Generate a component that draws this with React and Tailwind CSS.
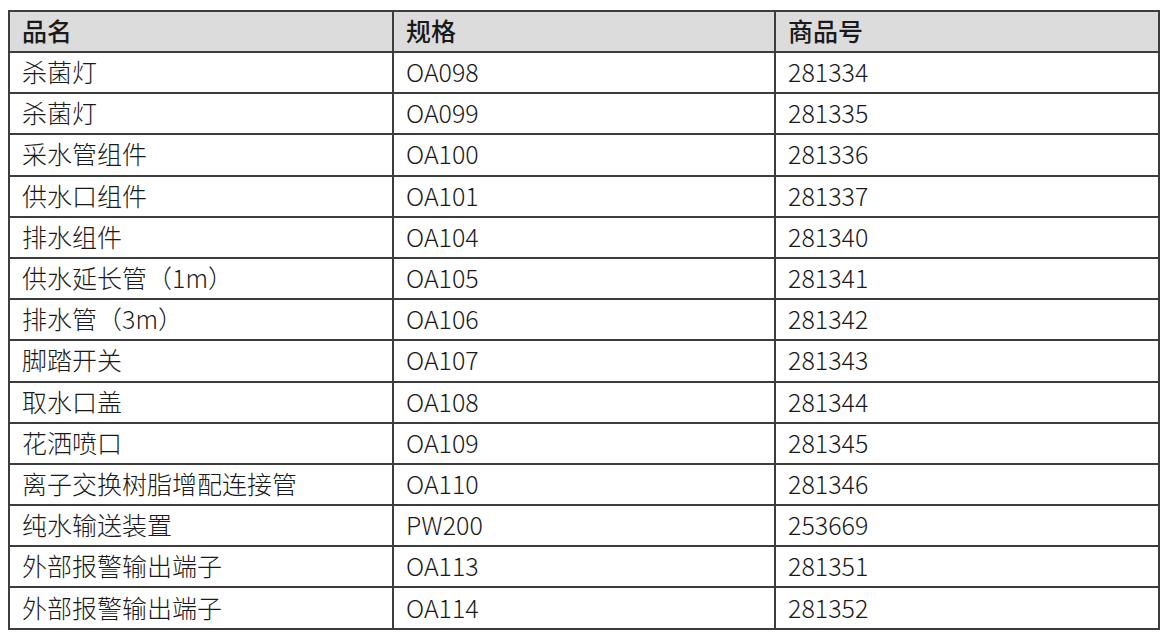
import React from 'react'

const rows = [
    ['杀菌灯', 'OA098', '281334'],
    ['杀菌灯', 'OA099', '281335'],
    ['采水管组件', 'OA100', '281336'],
    ['供水口组件', 'OA101', '281337'],
    ['排水组件', 'OA104', '281340'],
    ['供水延长管（1m）', 'OA105', '281341'],
    ['排水管（3m）', 'OA106', '281342'],
    ['脚踏开关', 'OA107', '281343'],
    ['取水口盖', 'OA108', '281344'],
    ['花洒喷口', 'OA109', '281345'],
    ['离子交换树脂增配连接管', 'OA110', '281346'],
    ['纯水输送装置', 'PW200', '253669'],
    ['外部报警输出端子', 'OA113', '281351'],
    ['外部报警输出端子', 'OA114', '281352'],
]

export default function App() {
    return (
        <div className="min-h-screen bg-white pt-[10px] pl-[8px] text-[#1a1a1a]" style={{ fontFamily: '"Noto Sans CJK SC", "Noto Sans", sans-serif' }}>
            <table className="w-[1150px] table-fixed border-collapse text-[25px] leading-none">
                <colgroup>
                    <col className="w-[384px]" />
                    <col className="w-[382px]" />
                    <col className="w-[384px]" />
                </colgroup>
                <thead>
                    <tr className="h-[41px] bg-[#dcdcdc]">
                        <th className="border-2 border-[#3c3c3c] pl-[12px] pb-[2px] text-left font-medium">品名</th>
                        <th className="border-2 border-[#3c3c3c] pl-[12px] pb-[2px] text-left font-medium">规格</th>
                        <th className="border-2 border-[#3c3c3c] pl-[12px] pb-[2px] text-left font-medium">商品号</th>
                    </tr>
                </thead>
                <tbody>
                    {rows.map((r, i) => (
                        <tr key={i} className="h-[41.2px] font-light">
                            <td className="border-2 border-[#3c3c3c] pl-[12px] pb-[2px]">{r[0]}</td>
                            <td className="border-2 border-[#3c3c3c] pl-[12px] pb-[2px]">{r[1]}</td>
                            <td className="border-2 border-[#3c3c3c] pl-[12px] pb-[2px]">{r[2]}</td>
                        </tr>
                    ))}
                </tbody>
            </table>
        </div>
    )
}
